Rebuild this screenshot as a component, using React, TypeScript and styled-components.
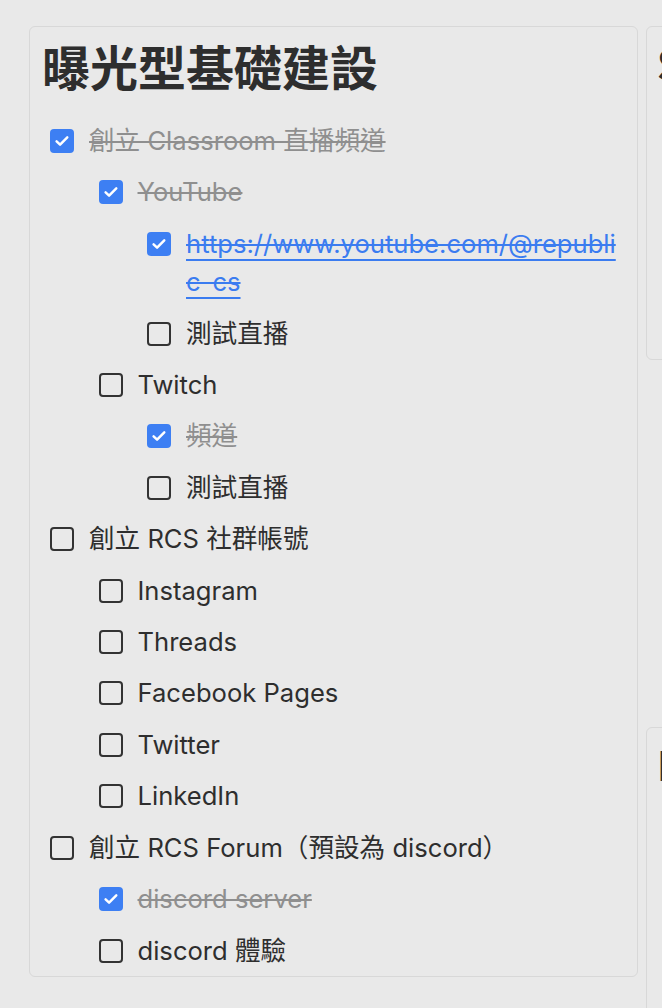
import React from "react";
import styled, { createGlobalStyle } from "styled-components";

const GlobalStyle = createGlobalStyle`
  html, body {
    margin: 0;
    padding: 0;
    background: #e9e9e9;
    overflow: hidden;
  }
  body {
    font-family: Inter, "Noto Sans CJK TC", sans-serif;
    color: #2e2e2e;
  }
`;

const Board = styled.main`
  display: flex;
  align-items: flex-start;
  gap: 8px;
  padding: 26px 0 0 29px;
  width: 662px;
  height: 1008px;
  box-sizing: border-box;
  overflow: hidden;
`;

const Card = styled.section<{ $width: number; $height: number; $side?: boolean }>`
  flex: 0 0 auto;
  width: ${(p) => p.$width}px;
  height: ${(p) => p.$height}px;
  box-sizing: border-box;
  border: 1px solid #d8d8d8;
  border-radius: 6px;
  padding: ${(p) => (p.$side ? "12px 15px 8px 10px" : "6px 15px 8px 12px")};
  overflow: hidden;
`;

const Column = styled.div`
  display: flex;
  flex-direction: column;
  gap: 367px;
`;

const Title = styled.h1`
  margin: 0 0 25px;
  font-family: "Noto Sans CJK TC", Inter, sans-serif;
  font-size: 48px;
  line-height: 64px;
  font-weight: 700;
  color: #2e2e2e;
  white-space: nowrap;
`;

const List = styled.ul`
  list-style: none;
  margin: 0;
  padding: 0 0 0 8px;
  display: flex;
  flex-direction: column;
  gap: 13px;
`;

const Row = styled.li<{ $level: number }>`
  display: flex;
  align-items: flex-start;
  gap: 15px;
  padding-left: ${(p) => p.$level * 48.5}px;
  font-size: 25.6px;
  line-height: 38.4px;
`;

const Box = styled.span<{ $checked: boolean }>`
  flex: 0 0 auto;
  width: 24px;
  height: 24px;
  margin-top: 7px;
  box-sizing: border-box;
  border-radius: 4px;
  display: flex;
  align-items: center;
  justify-content: center;
  background: ${(p) => (p.$checked ? "#3d7ff3" : "transparent")};
  border: ${(p) => (p.$checked ? "none" : "2px solid #333")};
`;

const Label = styled.span<{ $checked: boolean }>`
  min-width: 0;
  color: ${(p) => (p.$checked ? "#8f8f8f" : "#2e2e2e")};
  text-decoration: ${(p) => (p.$checked ? "line-through" : "none")};
  text-decoration-thickness: 2px;
`;

const Link = styled.a`
  color: #3b7cf0;
  text-decoration: underline line-through;
  text-decoration-thickness: 2px;
  text-underline-offset: 6px;
  overflow-wrap: anywhere;
  word-break: break-all;
`;

const SideTitle = styled.h2`
  margin: 0;
  font-family: "Noto Sans CJK TC", Inter, sans-serif;
  font-size: 40px;
  line-height: 48px;
  font-weight: 700;
  white-space: nowrap;
`;

type Item = { level: number; text: string; checked?: boolean; link?: boolean };

const items: Item[] = [
  { level: 0, text: "創立 Classroom 直播頻道", checked: true },
  { level: 1, text: "YouTube", checked: true },
  { level: 2, text: "https://www.youtube.com/@republic-cs", checked: true, link: true },
  { level: 2, text: "測試直播" },
  { level: 1, text: "Twitch" },
  { level: 2, text: "頻道", checked: true },
  { level: 2, text: "測試直播" },
  { level: 0, text: "創立 RCS 社群帳號" },
  { level: 1, text: "Instagram" },
  { level: 1, text: "Threads" },
  { level: 1, text: "Facebook Pages" },
  { level: 1, text: "Twitter" },
  { level: 1, text: "LinkedIn" },
  { level: 0, text: "創立 RCS Forum（預設為 discord）" },
  { level: 1, text: "discord server", checked: true },
  { level: 1, text: "discord 體驗" },
];

function Check() {
  return (
    <svg width="18" height="18" viewBox="0 0 16 16" fill="none">
      <path d="M3.2 8.3l3.1 3 6.4-6.5" stroke="#fff" strokeWidth="2.2" strokeLinecap="round" strokeLinejoin="round" />
    </svg>
  );
}

export default function App() {
  return (
    <>
      <GlobalStyle />
      <Board>
        <Card $width={609} $height={951}>
          <Title>曝光型基礎建設</Title>
          <List>
            {items.map((item, i) => (
              <Row key={i} $level={item.level}>
                <Box $checked={!!item.checked}>{item.checked && <Check />}</Box>
                {item.link ? (
                  <Link href={item.text}>{item.text}</Link>
                ) : (
                  <Label $checked={!!item.checked}>{item.text}</Label>
                )}
              </Row>
            ))}
          </List>
        </Card>
        <Column>
          <Card $side $width={300} $height={334}>
            <SideTitle>Social</SideTitle>
          </Card>
          <Card $side $width={300} $height={400}>
            <SideTitle>Launch</SideTitle>
          </Card>
        </Column>
      </Board>
    </>
  );
}
